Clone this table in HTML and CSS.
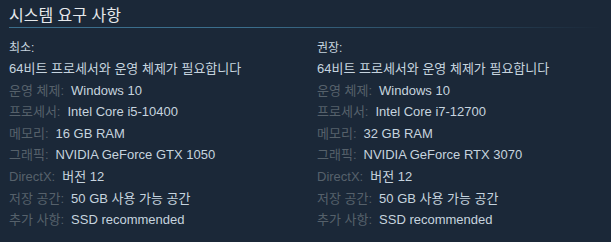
FILE: index.html
```html
<!DOCTYPE html>
<html lang="ko">
<head>
<meta charset="utf-8">
<link rel="stylesheet" href="styles.css">
</head>
<body>
<section class="sysreq">
  <h2 class="sysreq-title">시스템 요구 사항</h2>
  <div class="sysreq-cols">
    <div class="sysreq-col">
      <div class="col-head">최소:</div>
      <ul class="req-list">
        <li class="req-note">64비트 프로세서와 운영 체제가 필요합니다</li>
        <li><span class="lbl">운영 체제:</span><span class="val">Windows 10</span></li>
        <li><span class="lbl">프로세서:</span><span class="val">Intel Core i5-10400</span></li>
        <li><span class="lbl">메모리:</span><span class="val">16 GB RAM</span></li>
        <li><span class="lbl">그래픽:</span><span class="val">NVIDIA GeForce GTX 1050</span></li>
        <li><span class="lbl">DirectX:</span><span class="val">버전 12</span></li>
        <li><span class="lbl">저장 공간:</span><span class="val">50 GB 사용 가능 공간</span></li>
        <li><span class="lbl">추가 사항:</span><span class="val">SSD recommended</span></li>
      </ul>
    </div>
    <div class="sysreq-col">
      <div class="col-head">권장:</div>
      <ul class="req-list">
        <li class="req-note">64비트 프로세서와 운영 체제가 필요합니다</li>
        <li><span class="lbl">운영 체제:</span><span class="val">Windows 10</span></li>
        <li><span class="lbl">프로세서:</span><span class="val">Intel Core i7-12700</span></li>
        <li><span class="lbl">메모리:</span><span class="val">32 GB RAM</span></li>
        <li><span class="lbl">그래픽:</span><span class="val">NVIDIA GeForce RTX 3070</span></li>
        <li><span class="lbl">DirectX:</span><span class="val">버전 12</span></li>
        <li><span class="lbl">저장 공간:</span><span class="val">50 GB 사용 가능 공간</span></li>
        <li><span class="lbl">추가 사항:</span><span class="val">SSD recommended</span></li>
      </ul>
    </div>
  </div>
</section>
</body>
</html>
```

FILE: styles.css
```css
html, body {
  margin: 0;
  padding: 0;
  background: #1b2838;
}
body {
  font-family: "Liberation Sans", Arial, "Noto Sans CJK KR", sans-serif;
  color: #acb2b8;
}
.sysreq {
  padding: 6px 9px 0 9px;
}
.sysreq-title {
  margin: 0;
  font-size: 16px;
  font-weight: normal;
  color: #e6e9ec;
  line-height: 20px;
  padding-bottom: 1px;
}
.sysreq-title::after {
  content: "";
  display: block;
  height: 1px;
  margin-top: 1px;
  background: linear-gradient(to right, #3b6e8c 0%, #3b6e8c 40%, rgba(59,110,140,0) 100%);
}
.sysreq-cols {
  display: grid;
  grid-template-columns: 308px 1fr;
  padding-top: 9px;
}
.col-head {
  font-size: 12px;
  line-height: 20px;
  color: #c6d4df;
}
.req-list {
  list-style: none;
  margin: 0;
  padding: 0;
  font-size: 13px;
}
.req-list li {
  line-height: 21.6px;
  white-space: nowrap;
}
.req-note {
  color: #c6d4df;
}
.lbl {
  color: #56616b;
  margin-right: 7px;
}
.val {
  color: #c6d4df;
}
```
